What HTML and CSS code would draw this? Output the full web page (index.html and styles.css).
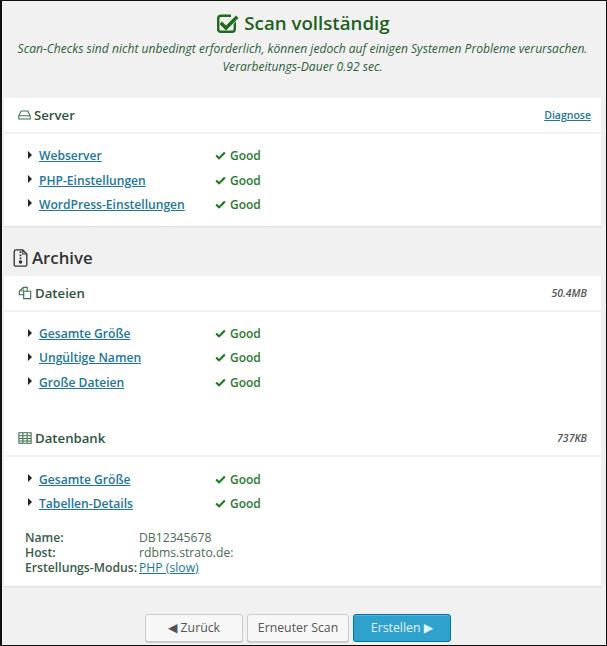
FILE: index.html
```html
<!DOCTYPE html>
<html lang="de">
<head>
<meta charset="utf-8">
<title>Scan vollständig</title>
<link rel="stylesheet" href="styles.css">
</head>
<body>
<div class="frame">
  <header class="top">
    <h1 class="title">
      <svg class="title-icon" viewBox="0 0 24 24" aria-hidden="true"><path d="M6 3.500h10v2.400H6A1.600 1.600 0 0 0 4.400 7.500v10.500A1.600 1.600 0 0 0 6 19.600h11a1.600 1.600 0 0 0 1.600-1.600v-5l2.400-2.400V18a4 4 0 0 1-4 4H6a4 4 0 0 1-4-4V7.500a4 4 0 0 1 4-4z" fill="#1f6a1f"/><path d="M7 10.500l4 4L21 4.500l2.500 2.500L11 19.500 4.500 13z" fill="#1f6a1f"/></svg>
      <span>Scan vollständig</span>
    </h1>
    <p class="note">Scan-Checks sind nicht unbedingt erforderlich, können jedoch auf einigen Systemen Probleme verursachen.</p>
    <p class="note">Verarbeitungs-Dauer 0.92 sec.</p>
  </header>

  <section class="card">
    <div class="card-head">
      <h2 class="card-title">
        <svg class="ico ico-server" viewBox="0 0 16 16" aria-hidden="true"><path d="M4 3h8l3 6v4H1V9z M1 9h14" fill="none" stroke="#3f6f4f" stroke-width="1.300"/></svg>
        Server
      </h2>
      <a class="link diag" href="#">Diagnose</a>
    </div>
    <ul class="checks">
      <li class="check"><span class="name"><i class="arrow"></i><a class="link" href="#">Webserver</a></span><span class="good"><svg class="tick" viewBox="0 0 12 10" aria-hidden="true"><path d="M1.200 5l3.200 3.200L10.800 1.600" fill="none" stroke="#127a12" stroke-width="2.300"/></svg>Good</span></li>
      <li class="check"><span class="name"><i class="arrow"></i><a class="link" href="#">PHP-Einstellungen</a></span><span class="good"><svg class="tick" viewBox="0 0 12 10" aria-hidden="true"><path d="M1.200 5l3.200 3.200L10.800 1.600" fill="none" stroke="#127a12" stroke-width="2.300"/></svg>Good</span></li>
      <li class="check"><span class="name"><i class="arrow"></i><a class="link" href="#">WordPress-Einstellungen</a></span><span class="good"><svg class="tick" viewBox="0 0 12 10" aria-hidden="true"><path d="M1.200 5l3.200 3.200L10.800 1.600" fill="none" stroke="#127a12" stroke-width="2.300"/></svg>Good</span></li>
    </ul>
  </section>

  <h2 class="section-title">
    <svg class="archive-ico" viewBox="0 0 16 20" aria-hidden="true"><path d="M3 1h7.500L15 5.500V17.500A1.500 1.500 0 0 1 13.500 19H2.500A1.500 1.500 0 0 1 1 17.500V3A2 2 0 0 1 3 1z" fill="none" stroke="#333" stroke-width="1.500"/><path d="M10.500 1v4.500H15" fill="none" stroke="#333" stroke-width="1.200"/><path d="M7 2.500h2v2H7zM7 6h2v2H7zM7 9.500h2v2H7z" fill="#333"/><circle cx="8" cy="14.500" r="2" fill="#333"/></svg>
    Archive
  </h2>

  <section class="card">
    <div class="card-head">
      <h2 class="card-title">
        <svg class="ico" viewBox="0 0 16 16" aria-hidden="true"><path d="M6 1.500h4.500v4.500" fill="none" stroke="#3f6f4f" stroke-width="1.300"/><path d="M6 1.500L1.500 6v4H6.500V6H14.500V14.500H6.500V10" fill="none" stroke="#3f6f4f" stroke-width="1.300"/><path d="M6 1.500V5.500H2" fill="none" stroke="#3f6f4f" stroke-width="1"/></svg>
        Dateien
      </h2>
      <span class="size">50.4MB</span>
    </div>
    <ul class="checks">
      <li class="check"><span class="name"><i class="arrow"></i><a class="link" href="#">Gesamte Größe</a></span><span class="good"><svg class="tick" viewBox="0 0 12 10" aria-hidden="true"><path d="M1.200 5l3.200 3.200L10.800 1.600" fill="none" stroke="#127a12" stroke-width="2.300"/></svg>Good</span></li>
      <li class="check"><span class="name"><i class="arrow"></i><a class="link" href="#">Ungültige Namen</a></span><span class="good"><svg class="tick" viewBox="0 0 12 10" aria-hidden="true"><path d="M1.200 5l3.200 3.200L10.800 1.600" fill="none" stroke="#127a12" stroke-width="2.300"/></svg>Good</span></li>
      <li class="check"><span class="name"><i class="arrow"></i><a class="link" href="#">Große Dateien</a></span><span class="good"><svg class="tick" viewBox="0 0 12 10" aria-hidden="true"><path d="M1.200 5l3.200 3.200L10.800 1.600" fill="none" stroke="#127a12" stroke-width="2.300"/></svg>Good</span></li>
    </ul>
    <div class="card-head second">
      <h2 class="card-title">
        <svg class="ico" viewBox="0 0 16 14" aria-hidden="true"><path d="M1 1h14v12H1z M1 4.500h14 M1 7.500h14 M1 10.500h14 M5.500 1v12 M10.500 1v12" fill="none" stroke="#3f6f4f" stroke-width="1.200"/></svg>
        Datenbank
      </h2>
      <span class="size">737KB</span>
    </div>
    <ul class="checks">
      <li class="check"><span class="name"><i class="arrow"></i><a class="link" href="#">Gesamte Größe</a></span><span class="good"><svg class="tick" viewBox="0 0 12 10" aria-hidden="true"><path d="M1.200 5l3.200 3.200L10.800 1.600" fill="none" stroke="#127a12" stroke-width="2.300"/></svg>Good</span></li>
      <li class="check"><span class="name"><i class="arrow"></i><a class="link" href="#">Tabellen-Details</a></span><span class="good"><svg class="tick" viewBox="0 0 12 10" aria-hidden="true"><path d="M1.200 5l3.200 3.200L10.800 1.600" fill="none" stroke="#127a12" stroke-width="2.300"/></svg>Good</span></li>
    </ul>
    <dl class="info">
      <dt>Name:</dt><dd>DB12345678</dd>
      <dt>Host:</dt><dd>rdbms.strato.de:</dd>
      <dt>Erstellungs-Modus:</dt><dd><a class="plain-link" href="#">PHP (slow)</a></dd>
    </dl>
  </section>

  <nav class="actions">
    <a class="btn" href="#">◀ Zurück</a>
    <a class="btn btn-wide" href="#">Erneuter Scan</a>
    <a class="btn primary" href="#">Erstellen ▶</a>
  </nav>
</div>
</body>
</html>
```

FILE: styles.css
```css
* { box-sizing: border-box; }
html, body { margin: 0; padding: 0; }
body {
  width: 607px;
  height: 646px;
  overflow: hidden;
  font-family: "Open Sans", "DejaVu Sans", sans-serif;
  font-size: 13px;
  color: #444;
}
.frame {
  width: 607px;
  height: 646px;
  overflow: hidden;
  background: #f1f1f1;
  border-style: solid;
  border-color: #111;
  border-width: 1px 1px 1px 2px;
  padding: 0 5px 0 2px;
}
.top { text-align: center; height: 97px; padding-top: 8px; }
.title {
  margin: 0 0 3px;
  display: flex;
  justify-content: center;
  align-items: center;
  gap: 5px;
  font-size: 18.700px;
  font-weight: 600;
  line-height: 28px;
  color: #1f5f1f;
}
.title-icon { width: 24px; height: 24px; }
.note {
  margin: 0;
  font-size: 12.100px;
  line-height: 18px;
  font-style: italic;
  color: #2e5e3a;
}
.card {
  background: #fff;
  box-shadow: 0 1px 1px rgba(0,0,0,.08);
}
.card-head {
  height: 36px;
  display: flex;
  justify-content: space-between;
  align-items: center;
  padding: 0 14px 0 14px;
  border-bottom: 2px solid #f1f1f1;
}
.card-head:first-child .diag { margin-right: -4px; }
.card-title {
  margin: 0;
  display: flex;
  align-items: center;
  gap: 3px;
  font-size: 13.200px;
  font-weight: 600;
  color: #2e5440;
}
.ico { width: 14px; height: 14px; }
.ico-server { width: 13px; }
.link {
  color: #21759b;
  font-weight: 600;
  font-size: 12.100px;
  text-decoration: underline;
}
.diag { font-size: 10.500px; }
.size { font-size: 10.500px; font-weight: 600; font-style: italic; color: #555; }
.checks {
  list-style: none;
  margin: 0;
  padding: 9.700px 0 9.100px 24px;
}
.check {
  display: flex;
  align-items: center;
  height: 24.300px;
}
.name {
  width: 187px;
  display: flex;
  align-items: center;
  gap: 7px;
}
.arrow {
  width: 0;
  height: 0;
  border-style: solid;
  border-width: 4px 0 4px 4px;
  border-color: transparent transparent transparent #222;
  margin-bottom: 2px;
}
.good {
  display: flex;
  align-items: center;
  gap: 4px;
  font-size: 12px;
  font-weight: 600;
  color: #2c7a2c;
}
.tick { width: 11px; height: 9px; }
.second { margin-top: 18px; }
.section-title {
  margin: 0;
  height: 50px;
  padding: 14px 0 0 9px;
  display: flex;
  align-items: center;
  gap: 4px;
  font-size: 16.800px;
  font-weight: 600;
  color: #333;
}
.archive-ico { width: 15px; height: 18px; flex: none; }
.info {
  margin: 0;
  padding: 5px 0 11px 21px;
  display: grid;
  grid-template-columns: 114px 1fr;
  font-size: 12.200px;
  line-height: 15px;
}
.info dt { font-weight: 600; color: #3c5a48; }
.info dd { margin: 0; color: #4e6a5a; }
.plain-link { color: #21759b; text-decoration: underline; }
.actions {
  display: flex;
  justify-content: center;
  gap: 4px;
  margin-top: 28px;
  padding-right: 9px;
}
.btn {
  height: 28px;
  width: 98px;
  display: flex;
  align-items: center;
  justify-content: center;
  font-size: 12.300px;
  color: #555;
  text-decoration: none;
  background: #f7f7f7;
  border: 1px solid #ccc;
  border-radius: 3px;
  box-shadow: 0 1px 0 #ccc;
}
.btn-wide { width: 102px; }
.primary {
  background: #2ea2cc;
  border-color: #0074a2;
  color: #e6f3f8;
  box-shadow: inset 0 1px 0 rgba(120,200,230,.5);
}
```
